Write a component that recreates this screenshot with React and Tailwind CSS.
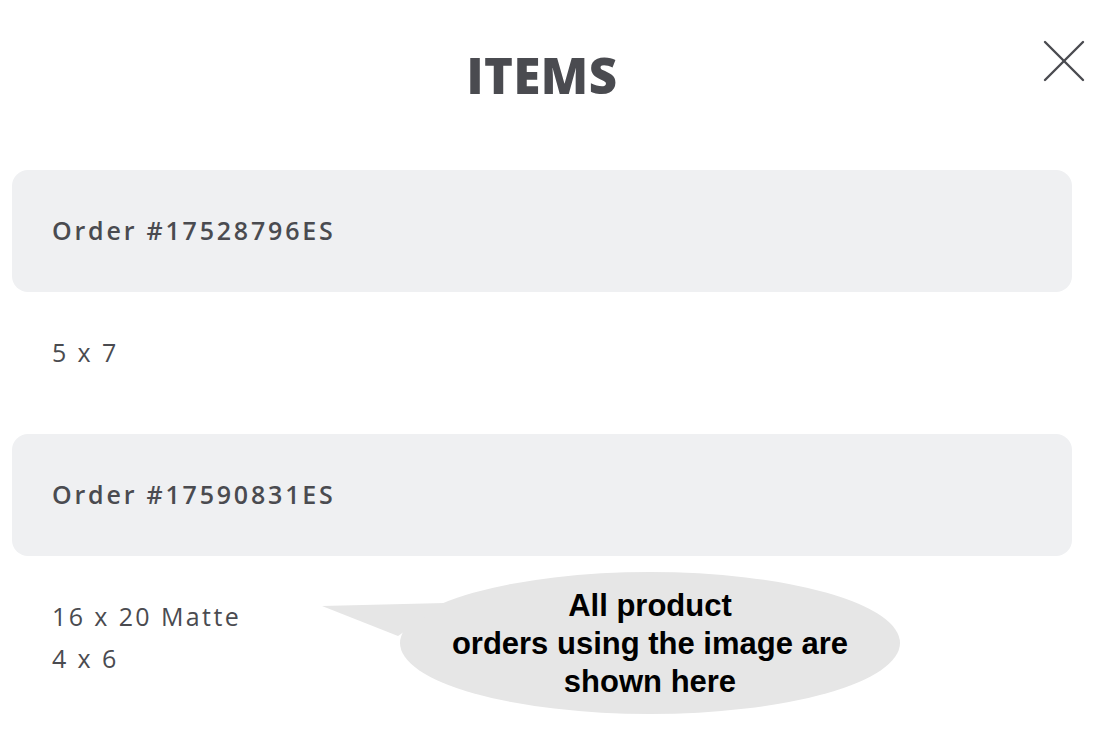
const orders = [
  { id: "17528796ES", items: ["5 x 7"] },
  { id: "17590831ES", items: ["16 x 20 Matte", "4 x 6"] },
];

function SpeechBubble() {
  return (
    <div className="absolute left-[320px] top-[572px] w-[580px] h-[142px]">
      <svg className="absolute inset-0" width="580" height="142" viewBox="0 0 580 142">
        <ellipse cx="330" cy="71" rx="250" ry="71" fill="#e6e6e6" />
        <polygon points="2,34 125,31 78,64" fill="#e6e6e6" />
      </svg>
      <div className="absolute left-[80px] right-0 top-[15px] text-center font-['Liberation_Sans',Arial,sans-serif] font-bold text-[31px] leading-[38px] text-black">
        All product
        <br />
        orders using the image are
        <br />
        shown here
      </div>
    </div>
  );
}

export default function App() {
  return (
    <div className="relative w-[1112px] h-[752px] bg-white overflow-hidden font-['Open_Sans',sans-serif] text-[#4a4b50]">
      <button className="absolute left-[1043px] top-[40px]">
        <svg width="42" height="42" viewBox="0 0 42 42" stroke="#4a4b50" strokeWidth="2.4" strokeLinecap="round">
          <line x1="2" y1="2" x2="40" y2="40" />
          <line x1="40" y1="2" x2="2" y2="40" />
        </svg>
      </button>

      <div className="ml-3 mr-10 flex flex-col">
        <div className="h-[170px] flex justify-center pt-[46px]">
          <h1 className="text-[49px] leading-[58px] font-extrabold tracking-[0.5px]">ITEMS</h1>
        </div>

        {orders.map(o => (
          <div key={o.id} className="flex flex-col">
            <div className="h-[122px] rounded-2xl bg-[#eff0f2] flex items-center pl-10 text-[25px] font-semibold tracking-[2.8px]">
              Order #{o.id}
            </div>
            <div className="h-[142px] pt-[39px] pl-10 flex flex-col text-[25px] leading-[42px] tracking-[2.4px]">
              {o.items.map(it => (
                <div key={it}>{it}</div>
              ))}
            </div>
          </div>
        ))}
      </div>

      <SpeechBubble />
    </div>
  );
}
